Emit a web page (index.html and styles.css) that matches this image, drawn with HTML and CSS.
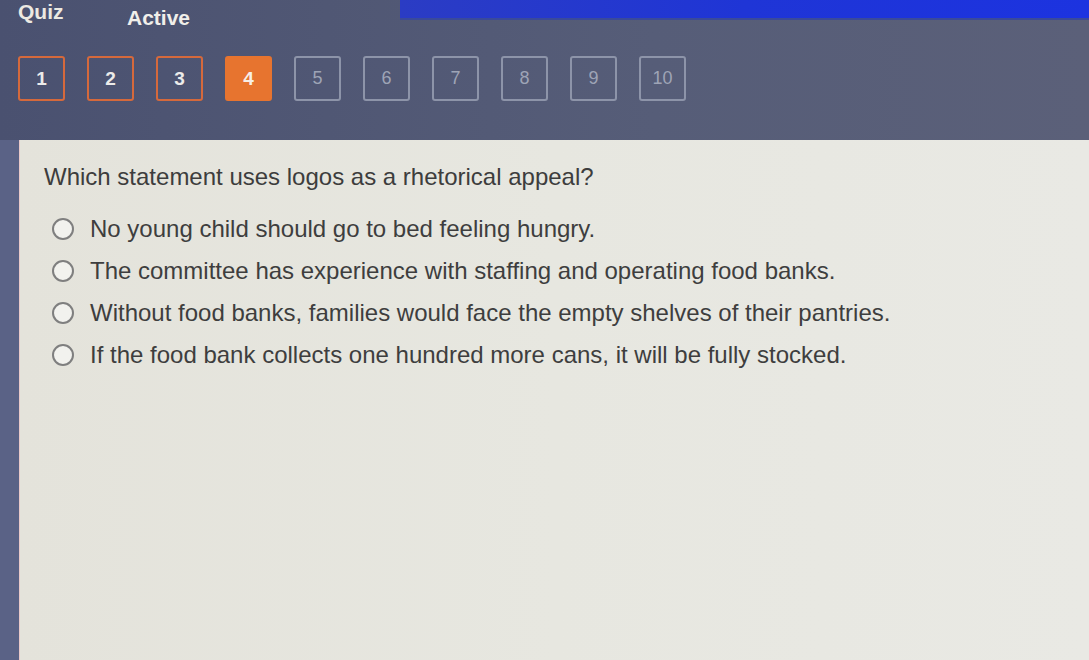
FILE: index.html
```html
<!DOCTYPE html>
<html>
<head>
<meta charset="utf-8">
<link rel="stylesheet" href="styles.css">
</head>
<body>
<div class="page">
  <header class="header">
    <div class="top">
      <span class="title">Quiz</span>
      <span class="status">Active</span>
      <div class="blue"></div>
    </div>
    <nav class="nums">
      <button class="num done">1</button>
      <button class="num done">2</button>
      <button class="num done">3</button>
      <button class="num current">4</button>
      <button class="num">5</button>
      <button class="num">6</button>
      <button class="num">7</button>
      <button class="num">8</button>
      <button class="num">9</button>
      <button class="num">10</button>
    </nav>
  </header>
  <div class="body">
    <div class="strip"></div>
    <main class="panel">
      <p class="question">Which statement uses logos as a rhetorical appeal?</p>
      <ul class="options">
        <li class="opt"><span class="radio"></span><span>No young child should go to bed feeling hungry.</span></li>
        <li class="opt"><span class="radio"></span><span>The committee has experience with staffing and operating food banks.</span></li>
        <li class="opt"><span class="radio"></span><span>Without food banks, families would face the empty shelves of their pantries.</span></li>
        <li class="opt"><span class="radio"></span><span>If the food bank collects one hundred more cans, it will be fully stocked.</span></li>
      </ul>
    </main>
  </div>
</div>
</body>
</html>
```
FILE: styles.css
```css
* { box-sizing: border-box; }
html, body { margin: 0; padding: 0; height: 100%; }
body {
  font-family: "Liberation Sans", Arial, sans-serif;
  background: #4c5371;
  overflow: hidden;
}
.page {
  display: flex;
  flex-direction: column;
  height: 660px;
}
.header {
  background: linear-gradient(90deg, #4a5170 0%, #565d78 60%, #5b6079 100%);
  height: 140px;
  flex: none;
}
.top {
  display: flex;
  align-items: flex-start;
  height: 52px;
}
.title {
  color: #ece9e2;
  font-weight: bold;
  font-size: 21px;
  padding: 0 0 0 18px;
  width: 127px;
  line-height: 24px;
}
.status {
  color: #f1efea;
  font-weight: bold;
  font-size: 21px;
  margin-top: 6px;
  line-height: 24px;
}
.blue {
  flex: 1;
  margin-left: 210px;
  height: 20px;
  background: linear-gradient(90deg, #2b3cc4 0%, #1f35d6 50%, #1c33e0 100%);
  border-bottom: 2px solid #3a4a9a;
}
.nums {
  display: flex;
  gap: 22px;
  padding: 4px 0 0 18px;
}
.num {
  width: 47px;
  height: 45px;
  border-radius: 3px;
  background: transparent;
  border: 2px solid #8d94a9;
  color: #9ea4b6;
  font-family: "Liberation Sans", Arial, sans-serif;
  font-size: 18px;
  padding: 0;
}
.num.done {
  border-color: #d5693c;
  color: #ecebea;
  font-weight: bold;
  font-size: 19px;
}
.num.current {
  background: #e7742f;
  border-color: #e7742f;
  color: #f7efe8;
  font-weight: bold;
  font-size: 19px;
}
.body {
  flex: 1;
  display: flex;
}
.strip {
  width: 20px;
  background: #5a6286;
  border-right: 1px solid #e9c9c9;
}
.panel {
  flex: 1;
  background: linear-gradient(90deg, #e4e3db 0%, #e7e7e0 50%, #e9e9e4 100%);
  padding: 22px 0 0 24px;
}
.question {
  margin: 0;
  color: #3d3d3d;
  font-size: 24px;
  line-height: 30px;
}
.options {
  list-style: none;
  margin: 16px 0 0 0;
  padding: 0 0 0 8px;
}
.opt {
  display: flex;
  align-items: center;
  gap: 16px;
  color: #3e3e3e;
  font-size: 24px;
  height: 42px;
}
.radio {
  width: 22px;
  height: 22px;
  border-radius: 50%;
  border: 2px solid #7f7f7f;
  background: #f2f2ee;
  flex: none;
}
```
